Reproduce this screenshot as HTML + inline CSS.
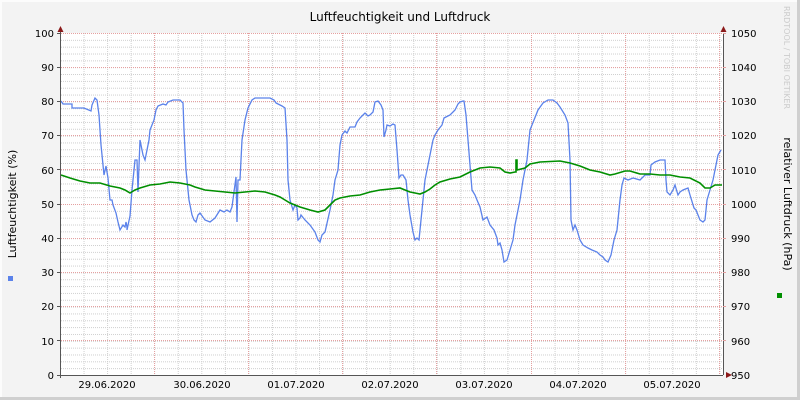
<!DOCTYPE html>
<html><head><meta charset="utf-8"><style>
html,body{margin:0;padding:0}
body{width:800px;height:400px;overflow:hidden;background:#f3f3f3}
svg{display:block}
text{font-family:"DejaVu Sans","Liberation Sans",sans-serif;font-size:10px;fill:#000}
</style></head><body>
<svg width="800" height="400" viewBox="0 0 800 400" xmlns="http://www.w3.org/2000/svg">
<defs>
<pattern id="ph" patternUnits="userSpaceOnUse" x="61" y="33" width="2" height="6.84"><rect x="0" y="0" width="1" height="1" fill="#cfcfcf"/></pattern>
<pattern id="pv" patternUnits="userSpaceOnUse" x="60" y="33" width="23.55" height="2"><rect x="0" y="0" width="1" height="1" fill="#cfcfcf"/></pattern>
</defs>
<rect x="0" y="0" width="800" height="400" fill="#f3f3f3"/>
<rect x="0" y="0" width="800" height="2" fill="#fcfcfc"/>
<rect x="0" y="0" width="2" height="400" fill="#fcfcfc"/>
<rect x="0" y="397" width="800" height="3" fill="#cfcfcf"/>
<rect x="797" y="0" width="3" height="400" fill="#cfcfcf"/>
<rect x="61" y="33" width="662" height="342" fill="#ffffff"/>
<rect x="61" y="33" width="662" height="342" fill="url(#ph)"/>
<rect x="61" y="33" width="662" height="342" fill="url(#pv)"/>
<g stroke="#e5a0a0" stroke-width="1" stroke-dasharray="1,1" fill="none" shape-rendering="crispEdges">
<path d="M61 340.5H723M61 306.5H723M61 272.5H723M61 238.5H723M61 204.5H723M61 169.5H723M61 135.5H723M61 101.5H723M61 67.5H723M61 33.5H723"/>
<path d="M154.5 33V375M248.5 33V375M342.5 33V375M436.5 33V375M531.5 33V375M625.5 33V375M719.5 33V375"/>
</g>
<polyline fill="none" stroke="#5b82ea" stroke-width="1.3" points="61,101 63,104 72,104 72,108 84,108 91,111 92,105 95,98 97,100 99,115 101,145 104,175 106,166 108,178 110,200 112,200 113,205 116,213 118,222 120,230 123,225 125,227 126,222 127,227 127,230 130,216 132,190 135,160 137,160 138,192 140,140 143,155 145,160 147,150 149,140 150,130 154,120 156,110 158,106 163,104 166,105 168,102 173,100 180,100 183,103 184,130 186,170 189,200 192,215 194,220 196,222 198,215 200,213 205,220 210,222 215,218 220,210 224,212 227,210 230,212 232,207 236,177 237,222 238,180 240,180 242,140 245,120 248,108 252,100 255,98 270,98 274,100 276,103 282,106 285,108 287,140 288,180 290,200 293,210 295,205 297,208 298,220 300,218 301,215 305,220 310,225 315,232 318,240 320,242 322,235 325,232 330,210 333,195 335,180 338,170 340,145 342,135 345,131 347,133 350,127 355,127 357,122 360,118 362,116 365,113 368,116 370,115 373,112 375,102 378,101 381,105 383,110 384,137 386,130 387,125 390,126 393,124 395,125 397,150 399,178 401,175 403,175 406,180 408,200 410,215 413,232 415,240 417,238 419,240 421,220 423,200 425,180 428,165 431,150 433,140 435,135 438,130 442,125 444,118 450,115 453,112 455,110 458,104 460,102 463,101 464,101 466,115 468,140 472,190 475,195 477,200 480,207 483,220 487,217 490,225 494,230 497,238 498,245 500,243 502,250 504,262 507,260 510,250 513,240 515,225 517,215 520,200 523,180 527,160 530,130 534,120 538,110 543,103 548,100 553,100 557,103 560,107 565,115 568,123 570,160 571,220 573,230 575,225 577,230 580,240 583,245 588,248 592,250 597,252 600,255 603,257 605,260 608,262 611,255 614,240 617,230 618,220 620,200 622,185 624,178 628,180 633,178 640,180 645,175 650,175 651,165 655,162 660,160 665,160 666,180 667,192 670,195 673,190 675,185 678,195 680,192 683,190 688,188 690,195 694,208 696,210 698,215 700,220 703,222 705,220 707,200 710,190 713,180 715,170 718,155 721,150"/>
<polyline fill="none" stroke="#008f00" stroke-width="1.6" points="61,175 70,178 80,181 90,183 100,183 110,186 120,188 125,190 130,193 135,190 140,188 150,185 160,184 170,182 180,183 190,185 195,187 205,190 215,191 225,192 235,193 245,192 255,191 265,192 275,195 280,197 285,200 290,203 295,205 300,207 310,210 318,212 325,210 330,205 335,200 340,198 350,196 360,195 370,192 380,190 390,189 400,188 405,190 410,192 415,193 420,194 425,192 430,189 435,185 440,182 450,179 460,177 470,172 475,170 480,168 490,167 500,168 505,172 510,173 515,172 516,172 516,160 517,160 517,170 525,168 530,164 540,162 560,161 570,163 580,166 590,170 600,172 610,175 615,174 625,171 630,171 640,174 650,174 660,175 670,175 675,176 680,177 690,178 700,183 705,188 710,188 715,185 722,185"/>
<g stroke="#555" stroke-width="1" shape-rendering="crispEdges"><path d="M60.5 30V378M723.5 33V375M57 375.5H723"/></g>
<path d="M57,33.5h4M57,67.5h4M57,101.5h4M57,135.5h4M57,169.5h4M57,204.5h4M57,238.5h4M57,272.5h4M57,306.5h4M57,340.5h4" stroke="#555" shape-rendering="crispEdges"/>
<path d="M723,33.5h3M723,67.5h3M723,101.5h3M723,135.5h3M723,169.5h3M723,204.5h3M723,238.5h3M723,272.5h3M723,306.5h3M723,340.5h3" stroke="#e5a0a0" shape-rendering="crispEdges"/>
<polygon points="57.5,32 63.5,32 60.5,26" fill="#8b1a1a"/>
<polygon points="720.5,32 726.5,32 723.5,26" fill="#8b1a1a"/>
<polygon points="726,372 726,378 732,375" fill="#8b1a1a"/>
<g text-anchor="end">
<text x="54" y="37">100</text><text x="54" y="71">90</text><text x="54" y="105">80</text><text x="54" y="139">70</text><text x="54" y="174">60</text><text x="54" y="208">50</text><text x="54" y="242">40</text><text x="54" y="276">30</text><text x="54" y="310">20</text><text x="54" y="345">10</text><text x="54" y="379">0</text>
</g>
<g>
<text x="731" y="37">1050</text><text x="731" y="71">1040</text><text x="731" y="105">1030</text><text x="731" y="139">1020</text><text x="731" y="174">1010</text><text x="731" y="208">1000</text><text x="731" y="242">990</text><text x="731" y="276">980</text><text x="731" y="310">970</text><text x="731" y="345">960</text><text x="731" y="379">950</text>
</g>
<g text-anchor="middle">
<text x="107" y="388">29.06.2020</text><text x="202" y="388">30.06.2020</text><text x="296" y="388">01.07.2020</text><text x="390" y="388">02.07.2020</text><text x="484" y="388">03.07.2020</text><text x="578" y="388">04.07.2020</text><text x="672" y="388">05.07.2020</text>
</g>
<text x="400" y="21" text-anchor="middle" style="font-size:12px">Luftfeuchtigkeit und Luftdruck</text>
<text transform="translate(16,204) rotate(-90)" text-anchor="middle" style="font-size:11px">Luftfeuchtigkeit (%)</text>
<text transform="translate(784,204) rotate(90)" text-anchor="middle" style="font-size:11px">relativer Luftdruck (hPa)</text>
<text transform="translate(784,6) rotate(90)" style="font-size:8px;fill:#cccccc">RRDTOOL / TOBI OETIKER</text>
<rect x="8" y="276" width="5" height="5" fill="#5b82ea"/>
<rect x="777" y="293" width="5" height="5" fill="#008f00"/>
</svg>
</body></html>
